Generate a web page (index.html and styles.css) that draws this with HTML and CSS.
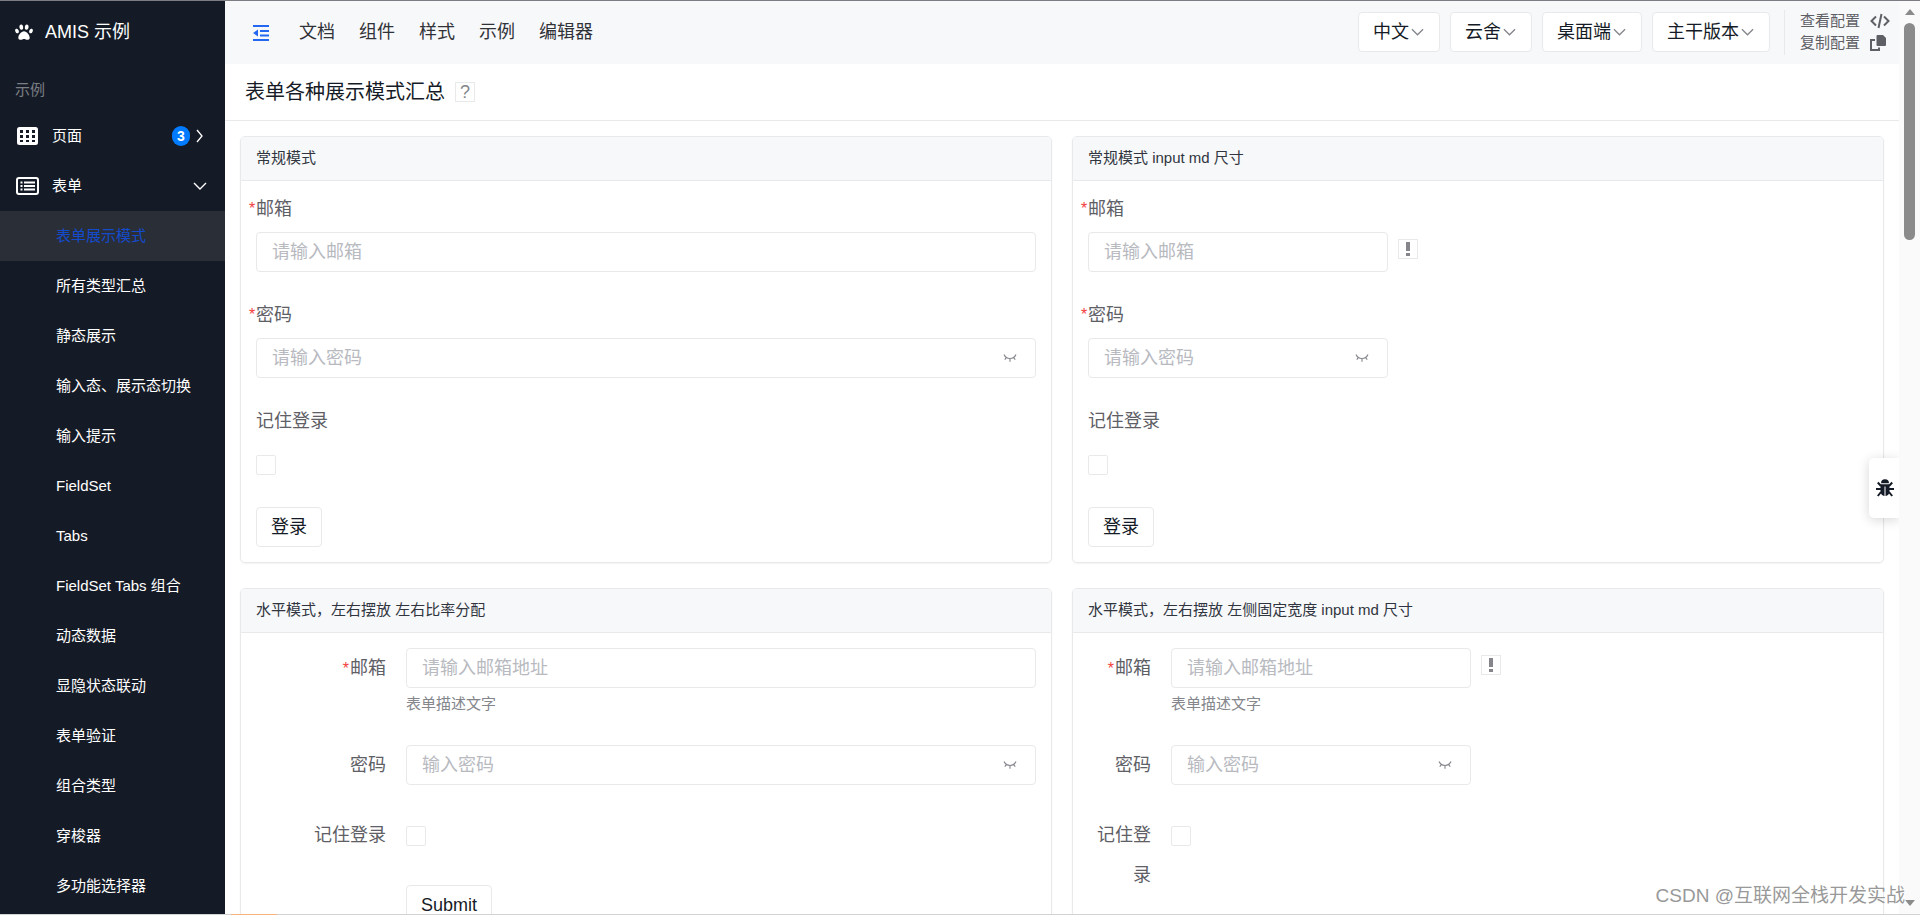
FILE: index.html
```html
<!DOCTYPE html>
<html lang="zh-CN">
<head>
<meta charset="utf-8">
<title>AMIS 示例</title>
<link rel="stylesheet" href="styles.css">
</head>
<body>
<svg class="defs" aria-hidden="true">
  <symbol id="chevron" viewBox="0 0 14 8"><path d="M1 1l6 6 6-6" fill="none" stroke="currentColor" stroke-width="1.4"/></symbol>
  <symbol id="eye-off" viewBox="0 0 14 10"><path d="M1 1.500C3.500 6.800 10.500 6.800 13 1.500M3.300 4.300L1.800 6.800M7 5.600V8.700M10.700 4.300l1.500 2.500" fill="none" stroke="currentColor" stroke-width="1.100"/></symbol>
</svg>
<div class="app">
  <aside class="sidebar">
    <a class="brand" href="#">
      <svg width="18" height="16" viewBox="0 0 18 16" fill="currentColor"><ellipse cx="6.300" cy="3.100" rx="1.900" ry="2.700" transform="rotate(-10 6.300 3.100)"/><ellipse cx="11.700" cy="3.100" rx="1.900" ry="2.700" transform="rotate(10 11.700 3.100)"/><ellipse cx="2" cy="7" rx="1.700" ry="2.300" transform="rotate(-22 2 7)"/><ellipse cx="16" cy="7" rx="1.700" ry="2.300" transform="rotate(22 16 7)"/><path d="M9 7.300c-2.600 0-5.700 3.900-5.700 6.400 0 1.500 1 2.100 2.200 2.100 1.400 0 2.300-.8 3.500-.8s2.100.8 3.500.8c1.200 0 2.200-.6 2.200-2.100 0-2.500-3.100-6.400-5.700-6.400z"/></svg>
      <span>AMIS 示例</span>
    </a>
    <nav class="menu">
      <p class="menu-title">示例</p>
      <a class="menu-item" href="#">
        <svg width="24" height="20" viewBox="0 0 24 20"><rect x="1" y="1" width="21" height="18" rx="2.500" fill="#fff"/><path d="M4 4h3v3H4zM10 4h3v3h-3zM16 4h3v3h-3zM4 9h3v3H4zM10 9h3v3h-3zM16 9h3v3h-3zM4 14h3v2H4zM10 14h3v2h-3zM16 14h3v2h-3z" fill="#151b26"/></svg>
        <span class="menu-text">页面</span>
        <span class="badge">3</span>
        <svg class="arrow" width="14" height="14" viewBox="0 0 14 14"><path d="M4 1l5 6-5 6" fill="none" stroke="currentColor" stroke-width="1.300"/></svg>
      </a>
      <a class="menu-item" href="#">
        <svg width="24" height="20" viewBox="0 0 24 20" fill="none" stroke="#fff"><rect x="1" y="2" width="21" height="16" rx="2" stroke-width="2"/><path d="M8 6.500h11M8 10h11M8 13.500h11M4.500 6.500h2M4.500 10h2M4.500 13.500h2" stroke-width="1.800"/></svg>
        <span class="menu-text">表单</span>
        <svg class="arrow" width="14" height="8"><use href="#chevron"/></svg>
      </a>
      <a class="sub-item active" href="#">表单展示模式</a>
      <a class="sub-item" href="#">所有类型汇总</a>
      <a class="sub-item" href="#">静态展示</a>
      <a class="sub-item" href="#">输入态、展示态切换</a>
      <a class="sub-item" href="#">输入提示</a>
      <a class="sub-item" href="#">FieldSet</a>
      <a class="sub-item" href="#">Tabs</a>
      <a class="sub-item" href="#">FieldSet Tabs 组合</a>
      <a class="sub-item" href="#">动态数据</a>
      <a class="sub-item" href="#">显隐状态联动</a>
      <a class="sub-item" href="#">表单验证</a>
      <a class="sub-item" href="#">组合类型</a>
      <a class="sub-item" href="#">穿梭器</a>
      <a class="sub-item" href="#">多功能选择器</a>
    </nav>
  </aside>

  <div class="main">
    <header class="topbar">
      <button class="fold" type="button" aria-label="收起菜单">
        <svg width="16" height="16" viewBox="0 0 16 16" fill="currentColor"><path d="M0 0h16v2H0zM7 5h9v2H7zM7 9.500h9v2H7zM0 14h16v2H0zM5 4.500v7L0 8z"/></svg>
      </button>
      <nav class="topnav">
        <a href="#">文档</a>
        <a href="#">组件</a>
        <a href="#">样式</a>
        <a href="#">示例</a>
        <a href="#">编辑器</a>
      </nav>
      <div class="selects">
        <div class="select"><select aria-label="语言"><option>中文</option></select><svg width="13" height="8"><use href="#chevron"/></svg></div>
        <div class="select"><select aria-label="主题"><option>云舍</option></select><svg width="13" height="8"><use href="#chevron"/></svg></div>
        <div class="select"><select aria-label="设备"><option>桌面端</option></select><svg width="13" height="8"><use href="#chevron"/></svg></div>
        <div class="select"><select aria-label="版本"><option>主干版本</option></select><svg width="13" height="8"><use href="#chevron"/></svg></div>
      </div>
      <div class="config">
        <a href="#">查看配置<svg width="20" height="16" viewBox="0 0 20 16" fill="none" stroke="currentColor" stroke-width="2"><path d="M6 3.500L1.500 8 6 12.500M14 3.500L18.500 8 14 12.500M11.500 1l-3 14"/></svg></a>
        <a href="#">复制配置<svg width="20" height="16" viewBox="0 0 20 16"><path d="M5 5H1v10h8v-2.500" fill="none" stroke="currentColor" stroke-width="2"/><path d="M7.500 0H13l3 3v7a1 1 0 0 1-1 1H7.500a1 1 0 0 1-1-1V1a1 1 0 0 1 1-1z" fill="currentColor"/></svg></a>
      </div>
    </header>

    <div class="page-head">
      <h1>表单各种展示模式汇总</h1>
      <button class="hint question" type="button" aria-label="帮助">?</button>
    </div>

    <div class="cards">
      <section class="card">
        <h2>常规模式</h2>
        <form class="form">
          <div class="field">
            <label class="required" for="a1">邮箱</label>
            <div class="control"><input class="text" id="a1" type="email" placeholder="请输入邮箱"></div>
          </div>
          <div class="field">
            <label class="required" for="a2">密码</label>
            <div class="control"><div class="password"><input class="text" id="a2" type="password" placeholder="请输入密码"><svg width="14" height="10"><use href="#eye-off"/></svg></div></div>
          </div>
          <div class="field">
            <label for="a3">记住登录</label>
            <div class="control check"><input id="a3" type="checkbox"></div>
          </div>
          <div class="field"><button class="btn" type="button">登录</button></div>
        </form>
      </section>

      <section class="card">
        <h2>常规模式 input md 尺寸</h2>
        <form class="form md">
          <div class="field">
            <label class="required" for="b1">邮箱</label>
            <div class="control"><input class="text" id="b1" type="email" placeholder="请输入邮箱"><span class="hint"><svg width="4" height="14" viewBox="0 0 4 14"><path d="M0 0h4v9H0zM0 11h4v3H0z" fill="currentColor"/></svg></span></div>
          </div>
          <div class="field">
            <label class="required" for="b2">密码</label>
            <div class="control"><div class="password"><input class="text" id="b2" type="password" placeholder="请输入密码"><svg width="14" height="10"><use href="#eye-off"/></svg></div></div>
          </div>
          <div class="field">
            <label for="b3">记住登录</label>
            <div class="control check"><input id="b3" type="checkbox"></div>
          </div>
          <div class="field"><button class="btn" type="button">登录</button></div>
        </form>
      </section>

      <section class="card">
        <h2>水平模式，左右摆放 左右比率分配</h2>
        <form class="form horizontal">
          <div class="field">
            <label class="required" for="c1">邮箱</label>
            <div><div class="control"><input class="text" id="c1" type="email" placeholder="请输入邮箱地址"></div><p class="desc">表单描述文字</p></div>
          </div>
          <div class="field">
            <label for="c2">密码</label>
            <div class="control"><div class="password"><input class="text" id="c2" type="password" placeholder="输入密码"><svg width="14" height="10"><use href="#eye-off"/></svg></div></div>
          </div>
          <div class="field">
            <label for="c3">记住登录</label>
            <div class="control check"><input id="c3" type="checkbox"></div>
          </div>
          <div class="field"><span></span><div><button class="btn" type="button">Submit</button></div></div>
        </form>
      </section>

      <section class="card">
        <h2>水平模式，左右摆放 左侧固定宽度 input md 尺寸</h2>
        <form class="form horizontal fixed md">
          <div class="field">
            <label class="required" for="d1">邮箱</label>
            <div><div class="control"><input class="text" id="d1" type="email" placeholder="请输入邮箱地址"><span class="hint"><svg width="4" height="14" viewBox="0 0 4 14"><path d="M0 0h4v9H0zM0 11h4v3H0z" fill="currentColor"/></svg></span></div><p class="desc">表单描述文字</p></div>
          </div>
          <div class="field">
            <label for="d2">密码</label>
            <div class="control"><div class="password"><input class="text" id="d2" type="password" placeholder="输入密码"><svg width="14" height="10"><use href="#eye-off"/></svg></div></div>
          </div>
          <div class="field">
            <label for="d3">记住登录</label>
            <div class="control check"><input id="d3" type="checkbox"></div>
          </div>
        </form>
      </section>
    </div>

    <button class="debug" type="button" aria-label="调试">
      <svg width="20" height="20" viewBox="0 0 20 20"><path d="M6 5.200a4 4 0 0 1 8 0z" fill="currentColor"/><path d="M5.500 6.300h9v7.200a4.500 4.500 0 0 1-9 0z" fill="currentColor"/><path d="M6 8L2.800 4.500M14 8l3.200-3.500M6 11H1M14 11h5M6 14l-3.200 4M14 14l3.200 4" stroke="currentColor" stroke-width="2" fill="none"/><path d="M10 8.500V18" stroke="#fff" stroke-width="1"/></svg>
    </button>
  </div>

  <div class="scrollbar" aria-hidden="true">
    <svg width="10" height="6" viewBox="0 0 10 6"><path d="M5 0l5 6H0z" fill="currentColor"/></svg>
    <div class="track"><div class="thumb"></div></div>
    <svg width="10" height="6" viewBox="0 0 10 6"><path d="M0 0h10L5 6z" fill="currentColor"/></svg>
  </div>
</div>
<div class="edge"><span></span></div>
<div class="watermark">CSDN @互联网全栈开发实战</div>
</body>
</html>
```
FILE: styles.css
```css
* { box-sizing: border-box; }

body {
  margin: 0;
  height: 100vh;
  display: flex;
  flex-direction: column;
  overflow: hidden;
  border-top: 1px solid #7d7c83;
  background: #fff;
  color: #151b26;
  font: 18px/24px "Liberation Sans", "Noto Sans CJK SC", sans-serif;
}

a { color: inherit; text-decoration: none; }
h1, h2, p { margin: 0; font-weight: 400; }
svg { display: block; flex: none; }
button, input, select { font: inherit; color: inherit; margin: 0; }
.defs { position: absolute; width: 0; height: 0; }

.app { flex: 1; min-height: 0; display: flex; overflow: hidden; }

/* sidebar */
.sidebar { flex: none; width: 225px; background: #151b26; color: #fff; overflow: hidden; }
.brand { display: flex; align-items: center; gap: 12px; height: 63px; padding: 0 0 2px 15px; }
.menu { font-size: 15px; }
.menu-title { height: 47px; padding: 14px 15px 0; color: #7b7e84; }
.menu-item { display: flex; align-items: center; height: 50px; padding: 0 18px 0 16px; }
.menu-text { flex: 1; padding-left: 12px; }
.badge {
  width: 18px;
  height: 20px;
  border-radius: 9px;
  background: #007bff;
  font-size: 14px;
  font-weight: 700;
  line-height: 20px;
  text-align: center;
}
.arrow { margin-left: 3px; }
.sub-item { display: flex; align-items: center; height: 50px; padding-left: 56px; }
.active { background: #2a2e36; color: #144bcc; }

/* main column */
.main { flex: 1; min-width: 0; position: relative; overflow: hidden; }
.topbar { display: flex; align-items: center; height: 63px; padding: 0 9px 0 28px; background: #f7f8fa; }
.fold { padding: 0; border: 0; background: none; color: #2468f2; }
.topnav { display: flex; gap: 24px; margin-left: 30px; padding-bottom: 1px; color: #303238; }
.selects { display: flex; gap: 10px; margin-left: auto; padding-bottom: 1px; }
.select { position: relative; }
.select select {
  appearance: none;
  display: block;
  height: 40px;
  padding: 0 30px 0 14px;
  border: 1px solid #e8e9eb;
  border-radius: 4px;
  background: #fff;
}
.select svg { position: absolute; right: 16px; top: 16px; color: #84868c; }
.config {
  height: 45px;
  margin-left: 14px;
  padding-left: 15px;
  border-left: 1px solid #e8e9eb;
  color: #5e6066;
  font-size: 15px;
  line-height: 22px;
}
.config a { display: flex; align-items: center; gap: 10px; }

.page-head { display: flex; align-items: center; gap: 10px; height: 57px; padding: 0 20px; border-bottom: 1px solid #e8e9eb; }
.page-head h1 { font-size: 20px; }
.hint {
  display: flex;
  flex: none;
  align-items: center;
  justify-content: center;
  width: 20px;
  height: 20px;
  border: 1px solid #e8e9eb;
  color: #84868c;
}
.question { padding: 0; background: none; line-height: 18px; }

.cards { display: grid; grid-template-columns: 1fr 1fr; gap: 25px 20px; padding: 15px; }
.card { min-width: 0; border: 1px solid #e8e9eb; border-radius: 5px; box-shadow: 0 1px 2px rgba(0, 0, 0, .05); }
.card h2 {
  height: 44px;
  padding: 0 15px;
  border-bottom: 1px solid #e8e9eb;
  border-radius: 4px 4px 0 0;
  background: #f7f8fa;
  color: #303540;
  font-size: 15px;
  line-height: 42px;
}

/* forms */
.form { display: flex; flex-direction: column; gap: 30px; padding: 15px; }
.form label { position: relative; display: block; width: max-content; margin-bottom: 10px; line-height: 26px; color: #5e6066; }
.required::before { content: "*"; position: absolute; left: -7px; color: #f33e3e; font-size: 16px; }
.control { display: flex; align-items: flex-start; gap: 10px; }
.text {
  display: block;
  width: 100%;
  height: 40px;
  padding: 0 15px;
  border: 1px solid #e8e9eb;
  border-radius: 4px;
  background: #fff;
}
.text::placeholder { color: #b8babf; opacity: 1; }
.password { position: relative; width: 100%; }
.password svg { position: absolute; right: 19px; top: 15px; color: #84868c; }
.md .text, .md .password { width: 300px; }
.control .hint { margin-top: 7px; }
.check { height: 33px; padding-top: 11px; }
.check input { appearance: none; width: 20px; height: 20px; border: 1px solid #e8e9eb; border-radius: 2px; background: #fff; }
.btn { height: 40px; padding: 0 14px; border: 1px solid #e8e9eb; border-radius: 4px; background: #fff; display: block; }
.desc { margin-top: 5px; color: #84868c; font-size: 15px; line-height: 22px; }

.horizontal .field { display: grid; grid-template-columns: calc(100% / 6) 1fr; column-gap: 20px; }
.fixed .field { grid-template-columns: 63px 1fr; }
.horizontal label { width: auto; margin: 0; line-height: 40px; text-align: right; }
.horizontal .required::before { position: static; margin-right: 1px; }
.horizontal .check { height: 40px; }

.debug {
  position: absolute;
  right: 0;
  top: 50%;
  width: 30px;
  height: 60px;
  padding: 0 0 0 6px;
  border: 0;
  border-radius: 5px 0 0 5px;
  background: #fff;
  box-shadow: 0 2px 12px rgba(0, 0, 0, .16);
}

/* scrollbar and window edge */
.scrollbar { flex: none; display: flex; flex-direction: column; align-items: center; gap: 8px; width: 21px; padding: 8px 0; background: #fafafa; color: #8b8b8b; }
.track { flex: 1; }
.thumb { width: 11px; height: 25%; border-radius: 6px; background: #8b8b8b; }
.edge { flex: none; height: 1px; padding-left: 231px; background: #d2d2d2; }
.edge span { display: block; width: 46px; height: 1px; background: #f9b27c; }

.watermark { position: absolute; right: 15px; bottom: 7px; color: #999; font-size: 19px; text-shadow: 1px 1px 0 #fff; }
```
